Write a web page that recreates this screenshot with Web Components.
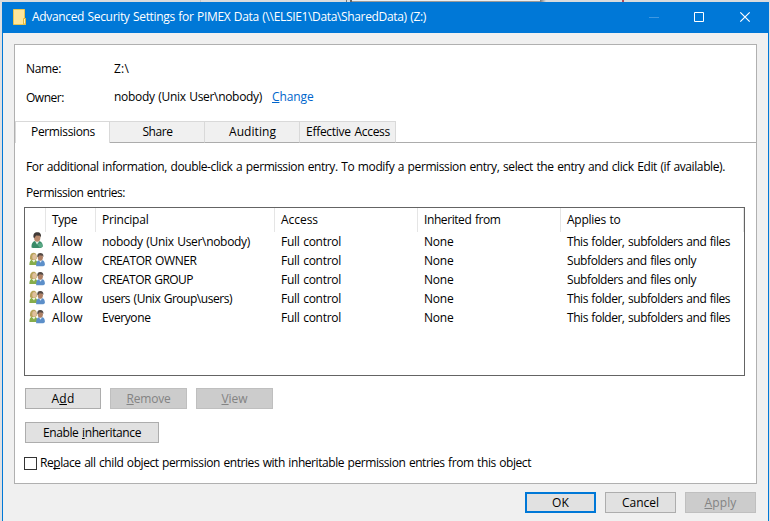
<!DOCTYPE html>
<html lang="en">
<head>
<meta charset="utf-8">
<title>Advanced Security Settings</title>
<style>
  html, body { margin: 0; height: 100%; overflow: hidden; }
  body {
    background: #e4e5e7;
    color: #000;
    font: 12px/16px "Open Sans", "Noto Sans", sans-serif;
  }
</style>
</head>
<body>
<sec-window>
  <sec-titlebar slot="title"><ui-text w="394">Advanced Security Settings for PIMEX Data (\\ELSIE1\Data\SharedData) (Z:)</ui-text></sec-titlebar>
  <sec-panel>
    <sec-field><ui-text slot="label" w="35">Name:</ui-text><ui-text w="15">Z:\</ui-text></sec-field>
    <sec-field><ui-text slot="label" w="38">Owner:</ui-text><ui-text w="148">nobody (Unix User\nobody)</ui-text><ui-text slot="action" w="41.500"><u>C</u>hange</ui-text></sec-field>
    <sec-tabs slot="tabs"></sec-tabs>
    <sec-page slot="page"></sec-page>
  </sec-panel>
  <sec-button slot="footer" width="71" primary><ui-text w="17">OK</ui-text></sec-button>
  <sec-button slot="footer" width="71"><ui-text w="37">Cancel</ui-text></sec-button>
  <sec-button slot="footer" width="71" disabled><ui-text w="32"><u>A</u>pply</ui-text></sec-button>
</sec-window>

<script>
class SecElement extends HTMLElement {
  connectedCallback() {
    if (this.shadowRoot) return
    this.attachShadow({ mode: "open" })
    this.render()
  }
}

/**
 * @component ui-text
 * @description Single line of text, tracked to fit the width in "w"
 */
class UiText extends SecElement {
  render() {
    this.shadowRoot.innerHTML = `
      <style>
        :host { display: inline-block; white-space: pre; flex: none; word-spacing: 0.8px; }
        ::slotted(u) { text-decoration: underline; text-underline-offset: 1px; text-decoration-thickness: 1px; text-decoration-skip-ink: none; }
      </style>
      <slot></slot>
    `.trim().replace(/>\s+</g, "><")
    const target = Number(this.getAttribute("w"))
    const natural = this.getBoundingClientRect().width
    if (target && natural) {
      this.style.letterSpacing = `${(target - natural) / this.textContent.length}px`
    }
  }
}

/**
 * @component sec-window
 * @description Dialog frame with title, body and footer buttons
 */
class SecWindow extends SecElement {
  render() {
    this.shadowRoot.innerHTML = `
      <style>
        :host {
          display: block;
          box-sizing: border-box;
          height: 521px;
          padding: 2px 1px 0 2px;
          background:
            linear-gradient(#b04a58, #b04a58) 622px 0 / 2px 2px no-repeat,
            linear-gradient(90deg, #777, #d9dbdd) 540px 0 / 6px 2px no-repeat,
            linear-gradient(#eee, #eee) 352px 0 / 188px 1px no-repeat,
            linear-gradient(#999, #999) 352px 1px / 188px 1px no-repeat,
            linear-gradient(#666, #666) 350px 0 / 2px 2px no-repeat,
            linear-gradient(#777, #777) 346px 0 / 1px 2px no-repeat,
            linear-gradient(#c4c4c4, #c4c4c4) 200px 0 / 1px 2px no-repeat,
            linear-gradient(#d9dbdd, #d9dbdd) 0 0 / 100% 2px no-repeat,
            #dfe0e2;
        }
        .frame {
          box-sizing: border-box;
          height: 519px;
          border: 1px solid #0078d7;
          border-bottom: 0;
          background: #f0f0f0;
        }
        .body { padding: 11px 11px 0; }
        .footer { display: flex; justify-content: flex-end; gap: 9px; padding: 8px 12px 0 0; }
      </style>
      <div class="frame">
        <slot name="title"></slot>
        <div class="body"><slot></slot></div>
        <div class="footer"><slot name="footer"></slot></div>
      </div>
    `
  }
}

/**
 * @component sec-titlebar
 * @description Blue caption bar with folder icon and window controls
 */
class SecTitlebar extends SecElement {
  render() {
    this.shadowRoot.innerHTML = `
      <style>
        :host { display: flex; height: 30px; background: #0078d7; color: #fff; }
        .icon { margin: 6px 6px 0 10px; width: 13px; height: 16px; flex: none; }
        .caption { flex: 1; padding-top: 6px; }
        .controls { flex: none; width: 138px; height: 30px; }
      </style>
      <svg class="icon" viewBox="0 0 13 16">
        <path d="M.5.5h11v9h1v6H.5z" fill="#ffe69b" stroke="#ecc650"/>
        <path d="M10.500 15V9.500h2V15z" fill="#fff0b9" stroke="#e0b83f"/>
      </svg>
      <div class="caption"><slot></slot></div>
      <svg class="controls" viewBox="0 0 138 30" fill="none">
        <path d="M19 14.500h10" stroke="#3e98e2"/>
        <path d="M64.500 9.500h9v9h-9z" stroke="#fff"/>
        <path d="M110.300 9.300l9.400 9.400M119.700 9.300l-9.400 9.400" stroke="#fff" stroke-width="1.200"/>
      </svg>
    `
  }
}

class SecPanel extends SecElement {
  render() {
    this.shadowRoot.innerHTML = `
      <style>
        :host {
          display: block;
          box-sizing: border-box;
          width: 743px;
          height: 440px;
          border: 1px solid #b0b0b0;
          background: #fff;
        }
        .fields { display: flex; flex-direction: column; gap: 12px; height: 60px; padding: 16px 11px 0; }
      </style>
      <div class="fields"><slot></slot></div>
      <slot name="tabs"></slot>
      <slot name="page"></slot>
    `
  }
}

class SecField extends SecElement {
  render() {
    this.shadowRoot.innerHTML = `
      <style>
        :host { display: flex; height: 16px; }
        :host(:nth-of-type(2)) .label { padding-top: 1px; }
        .label { width: 88px; flex: none; }
        .value { margin-right: 10px; }
        .action { color: #0066cc; }
      </style>
      <div class="label"><slot name="label"></slot></div>
      <div class="value"><slot></slot></div>
      <div class="action"><slot name="action"></slot></div>
    `
  }
}

/**
 * @component sec-tabs
 * @description Tab strip, first tab is the selected one
 */
class SecTabs extends SecElement {
  render() {
    const tabs = [
      ["Permissions", 95, 64],
      ["Share", 95, 30],
      ["Auditing", 95, 47],
      ["Effective Access", 96, 84],
    ]
    this.shadowRoot.innerHTML = `
      <style>
        :host { display: flex; height: 22px; }
        .tab {
          box-sizing: border-box;
          height: 22px;
          padding: 2px 0 0 1px;
          text-align: center;
          background: #f0f0f0;
          border: solid #d9d9d9;
          border-width: 1px 1px 0 0;
          border-bottom: 1px solid #acacac;
        }
        .tab.selected { background: #fff; border-left: 1px solid #d9d9d9; border-bottom: 0; }
        .rest { flex: 1; border-bottom: 1px solid #acacac; }
      </style>
      ${tabs.map(([name, width, w], i) => `<div class="tab ${i ? "" : "selected"}" style="width:${width}px"><ui-text w="${w}">${name}</ui-text></div>`).join("")}
      <div class="rest"></div>
    `
  }
}

class SecUserIcon extends SecElement {
  render() {
    const single = `
      <path d="M2.500 15.500c-.3-3.500 1-6 3.400-6.500l4.300-.1c2.600.6 3.800 3 3.500 5.600l-2 1.500H4z" fill="#3a8a68"/>
      <path d="M6 9l2 3.500L10.500 9z" fill="#dff0e8"/>
      <path d="M8 12l2.500 3.500H13l.8-1.500-1.500-3z" fill="#59a985"/>
      <ellipse cx="8.200" cy="5.500" rx="3.200" ry="4.200" fill="#b98a6d"/>
      <path d="M4.500 5.500C4 2 5.500.2 8.300.2c3 0 4.300 2 3.600 5.300L11 3.800 7 3.500 5.500 6z" fill="#403a37"/>`
    const group = `
      <path d="M.4 14c0-3 .7-4.500 2.200-5.200h3.600c1.700.8 2.300 2.200 2.100 5.200z" fill="#86ad4b"/>
      <path d="M2.800 9L5 11.500 6.500 9z" fill="#edf4dc"/>
      <path d="M1 8.300C.7 4 2 1.800 4.600 1.800S8 4 7.700 8L6.200 9H2.500z" fill="#b8a45c"/>
      <ellipse cx="5.300" cy="5.900" rx="2" ry="2.800" fill="#dfbf9d"/>
      <path d="M7.200 15.300c-.4-3.400.7-5.400 2.700-6h3.600c1.800.7 2.600 2.500 2.300 5l-1.500 1H8z" fill="#5c8fc9"/>
      <path d="M10 9.300l1.500 2.400 1.700-2.400z" fill="#e5eef8"/>
      <ellipse cx="11.300" cy="6.200" rx="2.600" ry="3.500" fill="#ae8065"/>
      <path d="M8.400 6C7.900 3.500 9 1.900 11.300 1.900c2.500 0 3.500 1.800 3 4.200l-.7-1.400-3-.5L9.100 6z" fill="#544a45"/>`
    this.shadowRoot.innerHTML = `
      <style>
        :host { display: block; width: 16px; height: 16px; }
        svg { display: block; }
      </style>
      <svg width="16" height="16" viewBox="0 0 16 16">${this.hasAttribute("group") ? group : single}</svg>
    `
  }
}

/**
 * @component sec-entries
 * @description List view of permission entries
 */
class SecEntries extends SecElement {
  render() {
    const cell = ([text, w]) => `<div class="cell"><ui-text w="${w}">${text}</ui-text></div>`
    const head = [["Type", 25], ["Principal", 46.5], ["Access", 37], ["Inherited from", 76.5], ["Applies to", 53.5]]
    const all = ["This folder, subfolders and files", 163]
    const sub = ["Subfolders and files only", 129]
    const rows = [
      ["nobody (Unix User\\nobody)", 148, all],
      ["CREATOR OWNER", 94.5, sub],
      ["CREATOR GROUP", 91, sub],
      ["users (Unix Group\\users)", 130, all],
      ["Everyone", 48.5, all],
    ]
    this.shadowRoot.innerHTML = `
      <style>
        :host { display: block; box-sizing: border-box; width: 721px; height: 169px; border: 1px solid #646464; }
        .row { display: grid; grid-template-columns: 21px 50px 179px 143px 143px 183px; height: 19px; }
        .head { height: 24px; }
        .cell { padding: 2px 0 0 6px; }
        .head .cell { padding-top: 4px; }
        .head > * { border-right: 1px solid #e5e5e5; }
        .icon { padding: 0 0 0 4px; }
      </style>
      <div class="row head"><div></div>${head.map(cell).join("")}</div>
      ${rows.map(([name, w, scope], i) => `
        <div class="row">
          <div class="icon"><sec-user-icon ${i ? "group" : ""}></sec-user-icon></div>
          ${[["Allow", 30.5], [name, w], ["Full control", 60], ["None", 29.5], scope].map(cell).join("")}
        </div>`).join("")}
    `
  }
}

class SecButton extends SecElement {
  render() {
    this.shadowRoot.innerHTML = `
      <style>
        :host {
          display: flex;
          align-items: center;
          justify-content: center;
          box-sizing: border-box;
          width: ${this.getAttribute("width")}px;
          height: 21px;
          border: 1px solid #adadad;
          background: #e1e1e1;
        }
        :host([primary]) { border: 2px solid #0078d7; }
        :host([disabled]) { border-color: #bfbfbf; background: #ccc; color: #838383; }
      </style>
      <slot></slot>
    `
  }
}

/**
 * @component sec-page
 * @description Content of the Permissions tab
 */
class SecPage extends SecElement {
  render() {
    this.shadowRoot.innerHTML = `
      <style>
        :host { display: flex; flex-direction: column; padding: 16px 0 0 9px; }
        .line { height: 16px; margin: 0 0 10px 2px; }
        .line + .line { margin-bottom: 6px; }
        .buttons { display: flex; gap: 9px; margin: 12px 0 0 1px; }
        .buttons + .buttons { margin-top: 13px; }
        .check { display: flex; align-items: center; gap: 3px; height: 16px; margin-top: 12px; }
        .box { box-sizing: border-box; width: 13px; height: 13px; border: 1px solid #333; }
      </style>
      <div class="line"><ui-text w="699">For additional information, double-click a permission entry. To modify a permission entry, select the entry and click Edit (if available).</ui-text></div>
      <div class="line"><ui-text w="99">Permission entries:</ui-text></div>
      <sec-entries></sec-entries>
      <div class="buttons">
        <sec-button width="76"><ui-text w="23">A<u>d</u>d</ui-text></sec-button>
        <sec-button width="77" disabled><ui-text w="44"><u>R</u>emove</ui-text></sec-button>
        <sec-button width="77" disabled><ui-text w="26"><u>V</u>iew</ui-text></sec-button>
      </div>
      <div class="buttons">
        <sec-button width="134"><ui-text w="98">Enable <u>i</u>nheritance</ui-text></sec-button>
      </div>
      <div class="check"><span class="box"></span><ui-text w="491">Re<u>p</u>lace all child object permission entries with inheritable permission entries from this object</ui-text></div>
    `
  }
}

customElements.define("sec-window", SecWindow)
customElements.define("sec-titlebar", SecTitlebar)
customElements.define("sec-panel", SecPanel)
customElements.define("sec-field", SecField)
customElements.define("sec-tabs", SecTabs)
customElements.define("sec-user-icon", SecUserIcon)
customElements.define("sec-entries", SecEntries)
customElements.define("sec-button", SecButton)
customElements.define("sec-page", SecPage)
customElements.define("ui-text", UiText)
</script>
</body>
</html>
